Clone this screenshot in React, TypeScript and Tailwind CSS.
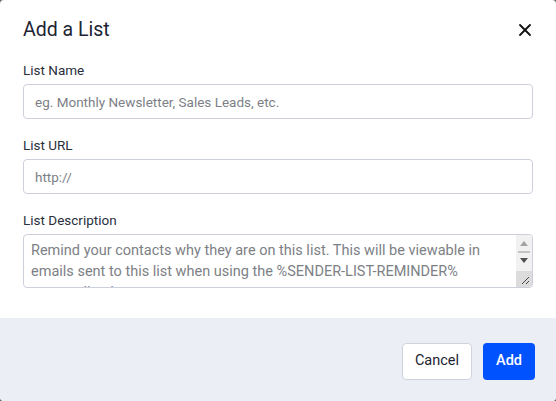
import { X } from "lucide-react";

const font = { fontFamily: "Roboto, 'Noto Sans', sans-serif" };

const desc =
  "Remind your contacts why they are on this list. This will be viewable in emails sent to this list when using the %SENDER-LIST-REMINDER% personalization tag.";

const labelCls = "block text-[13.5px] text-[#2a2f3c] leading-[20px]";
const inputCls =
  "mt-[4px] w-full h-[35px] border border-[#ccd0dc] rounded-[4px] px-[11px] text-[13.5px] text-[#333] placeholder:text-[#7d7f86] outline-none";

function FakeScrollbar() {
  return (
    <div className="w-[16px] bg-[#f1f1f1] flex flex-col">
      <div className="flex-1 flex flex-col items-center pt-[6px]">
        <svg width="8" height="5" viewBox="0 0 8 5">
          <path d="M0 5 L4 0 L8 5 Z" fill="#a3a3a3" />
        </svg>
        <div className="mt-[5px] w-[12px] h-[2px] bg-[#c3c3c3]" />
        <svg width="8" height="5" viewBox="0 0 8 5" className="mt-[5px]">
          <path d="M0 0 L8 0 L4 5 Z" fill="#505050" />
        </svg>
      </div>
      <div className="h-[16px] bg-[#dcdcdc] relative">
        <svg width="16" height="16" viewBox="0 0 16 16" className="absolute inset-0">
          <path d="M13 6 L6 13 M13 10 L10 13" stroke="#444" strokeWidth="1" />
        </svg>
      </div>
    </div>
  );
}

export default function App() {
  return (
    <div className="w-[556px] h-[401px] bg-[#6b6b6b]" style={font}>
      <div className="w-full h-full bg-white rounded-[4px] overflow-hidden flex flex-col">
        <div className="px-[23px] pt-[18px] flex-1">
          <div className="flex items-center justify-between h-[24px]">
            <h1 className="text-[19.5px] text-[#1d2433] leading-none">Add a List</h1>
            <button className="text-[#111] -mr-[2px]">
              <X size={20} strokeWidth={2.2} />
            </button>
          </div>

          <label className={labelCls + " mt-[18px]"}>List Name</label>
          <input className={inputCls} placeholder="eg. Monthly Newsletter, Sales Leads, etc." />

          <label className={labelCls + " mt-[16px]"}>List URL</label>
          <input className={inputCls} placeholder="http://" />

          <label className={labelCls + " mt-[16px]"}>List Description</label>
          <div className="mt-[4px] h-[54px] border border-[#ccd0dc] rounded-[4px] flex overflow-hidden">
            <textarea
              className="flex-1 h-full px-[7px] pt-[5px] text-[14.5px] leading-[21px] text-[#7d7f86] outline-none overflow-hidden resize-none"
              defaultValue={desc}
            />
            <FakeScrollbar />
          </div>
        </div>

        <div className="h-[83px] bg-[#eceef6] flex items-center justify-end gap-[11px] px-[21px] pt-[3px]">
          <button className="h-[37px] w-[70px] bg-white border border-[#cfd3de] rounded-[4px] text-[14.5px] text-[#1d2433]">
            Cancel
          </button>
          <button className="h-[37px] w-[52px] bg-[#0052ff] rounded-[4px] text-[14.5px] font-medium text-white">
            Add
          </button>
        </div>
      </div>
    </div>
  );
}
